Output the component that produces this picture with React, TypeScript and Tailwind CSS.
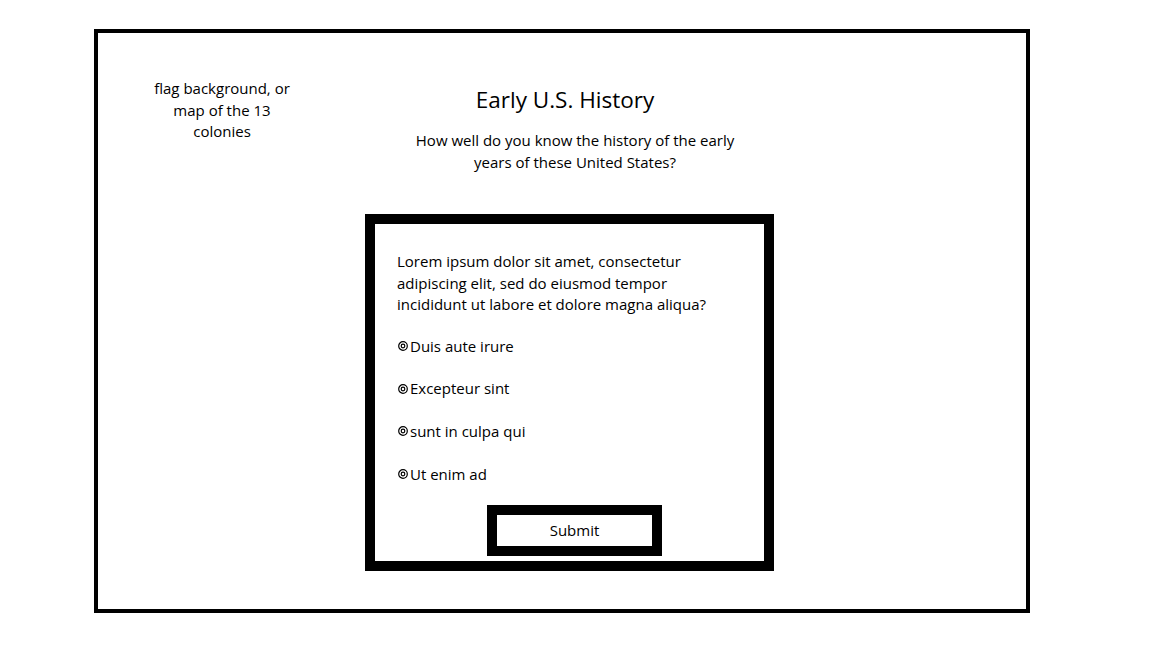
export default function App() {
  const options = ["Duis aute irure", "Excepteur sint", "sunt in culpa qui", "Ut enim ad"];

  return (
    <div className="min-h-screen w-full bg-white text-black pl-[94px] pt-[29px]" style={{ fontFamily: '"Open Sans", "Noto Sans", sans-serif' }}>
      <div className="w-[936px] h-[584px] border-4 border-black flex flex-col">
        <div className="flex">
          <div className="ml-[49px] mt-[45px] w-[150px] text-center text-[15px] leading-[21.5px]">
            flag background, or
            <br />
            map of the 13
            <br />
            colonies
          </div>
          <div className="ml-[108px] mt-[51px] w-[340px] text-center">
            <h1 className="pr-[20px] text-[22.5px] leading-[32px]">Early U.S. History</h1>
            <p className="mt-[13px] text-[15px] leading-[22px]">
              How well do you know the history of the early
              <br />
              years of these United States?
            </p>
          </div>
        </div>

        <div className="ml-[267px] mt-[41px] w-[409px] h-[357px] border-[10px] border-black pl-[22px] pt-[27px]">
          <p className="text-[15px] leading-[21.5px]">
            Lorem ipsum dolor sit amet, consectetur
            <br />
            adipiscing elit, sed do eiusmod tempor
            <br />
            incididunt ut labore et dolore magna aliqua?
          </p>
          <div className="mt-[19px] flex flex-col gap-[20.7px]">
            {options.map((o) => (
              <label key={o} className="flex items-center text-[15px] leading-[22px]">
                <svg width="10" height="10" viewBox="0 0 10 10" className="ml-[1px] mr-[2px] mt-[1px]">
                  <circle cx="5" cy="5" r="4.3" fill="none" stroke="black" strokeWidth="1.2" />
                  <circle cx="5" cy="5" r="1.8" fill="none" stroke="black" strokeWidth="1.2" />
                </svg>
                {o}
              </label>
            ))}
          </div>
          <div className="mt-[20px] ml-[90px] w-[175px] h-[51px] border-[10px] border-black flex items-center justify-center text-[15px]">
            Submit
          </div>
        </div>
      </div>
    </div>
  );
}
